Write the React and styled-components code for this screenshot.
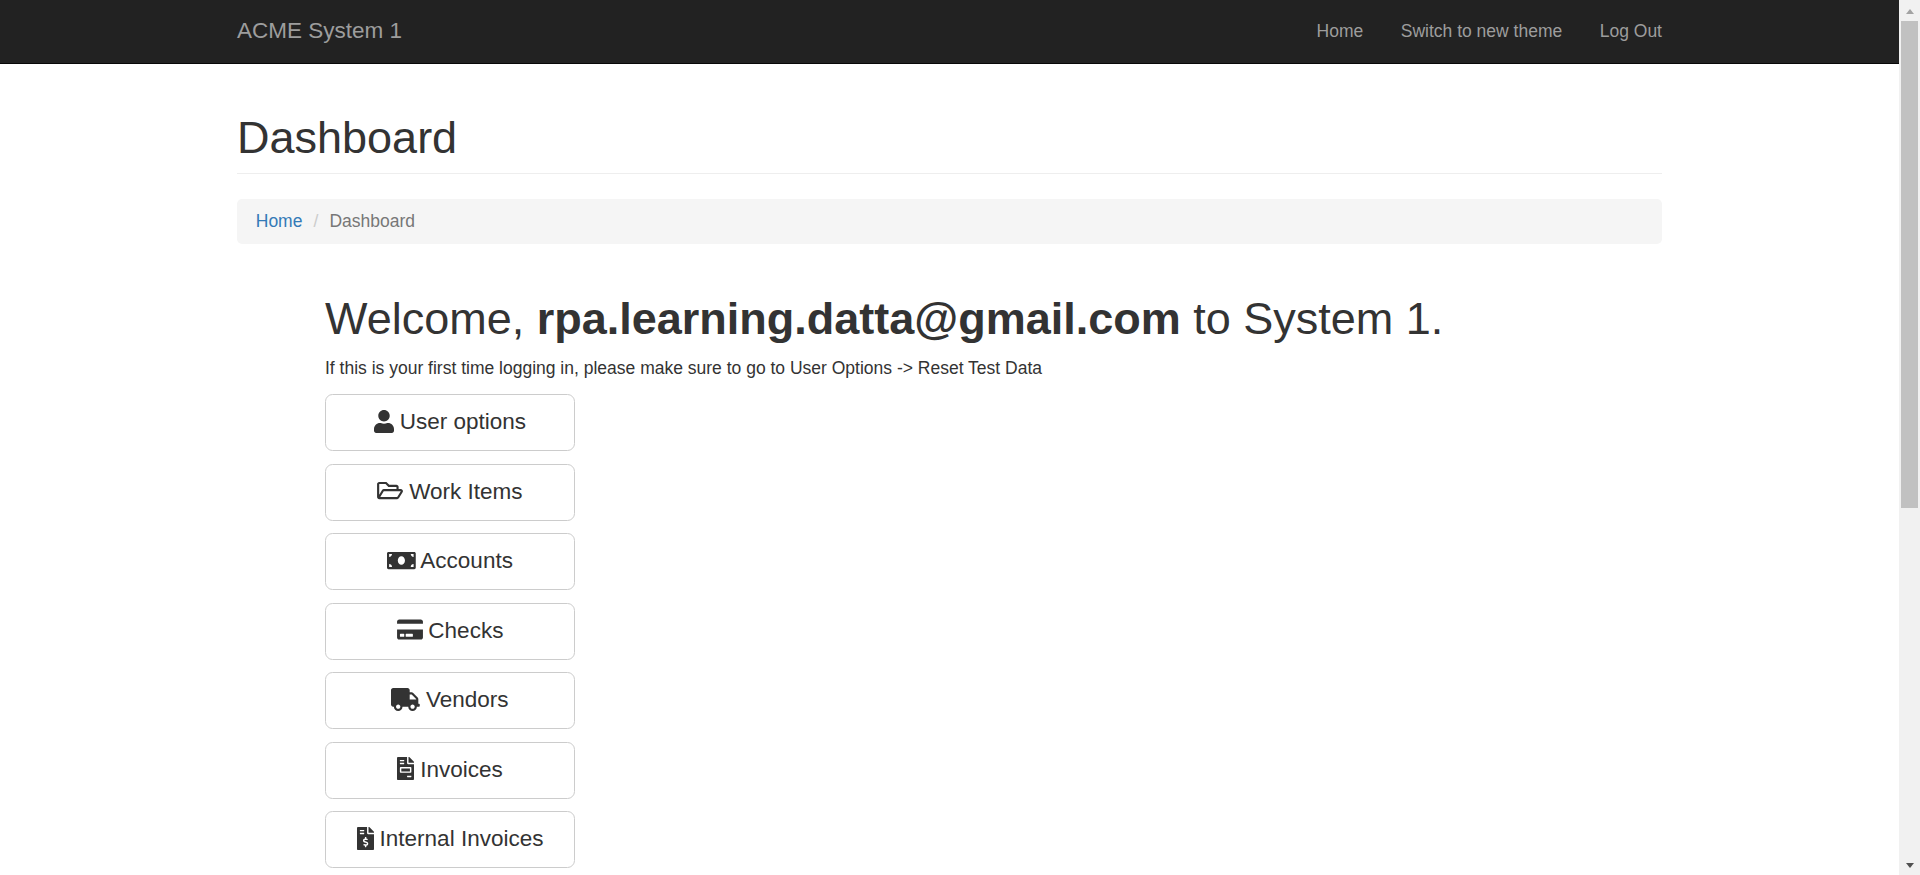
import React from "react";
import styled, { createGlobalStyle } from "styled-components";
import {
  FaUser,
  FaRegFolderOpen,
  FaMoneyBill,
  FaCreditCard,
  FaTruck,
  FaFileInvoice,
  FaFileInvoiceDollar,
} from "react-icons/fa";

const GlobalStyle = createGlobalStyle`
  *, *::before, *::after { box-sizing: border-box; }
  html, body { margin: 0; overflow: hidden; }
  body {
    font-family: "Liberation Sans", Arial, sans-serif;
    font-size: 17.5px;
    line-height: 25px;
    color: #333;
    background: #fff;
  }
`;

const Window = styled.div`
  display: flex;
  height: 875px;
  overflow: hidden;
`;

const Page = styled.div`
  flex: 1;
  min-width: 0;
`;

const Container = styled.div`
  width: 1425px;
  margin: 0 auto;
`;

const Navbar = styled.nav`
  height: 64px;
  background: #222;
  border-bottom: 1px solid #080808;
`;

const NavRow = styled(Container)`
  display: flex;
  justify-content: space-between;
  align-items: center;
  height: 62px;
`;

const Brand = styled.a`
  padding-bottom: 1px;
  font-size: 22.5px;
  color: #9d9d9d;
`;

const NavLinks = styled.div`
  display: flex;
  gap: 37.5px;
`;

const NavLink = styled.a`
  color: #9d9d9d;
`;

const PageHeader = styled.header`
  margin: 48.5px 0 25px;
  padding-bottom: 11px;
  border-bottom: 1px solid #eee;
`;

const Heading = styled.h1`
  margin: 0;
  font-size: 45px;
  line-height: 49.5px;
  font-weight: 400;
  white-space: nowrap;
`;

const Breadcrumb = styled.nav`
  display: flex;
  height: 45px;
  padding: 10px 18.75px;
  border-radius: 5px;
  background: #f5f5f5;
`;

const CrumbLink = styled.a`
  color: #337ab7;
`;

const CrumbDivider = styled.span`
  width: 27px;
  text-align: center;
  color: #ccc;
`;

const CrumbCurrent = styled.span`
  color: #777;
`;

const Content = styled.main`
  padding: 50px 0 0 88px;
`;

const Intro = styled.p`
  margin: 12px 0 13.5px;
`;

const Menu = styled.div`
  display: flex;
  flex-direction: column;
  gap: 12.5px;
`;

const MenuButton = styled.button`
  width: 250px;
  height: 57px;
  padding: 0 0 1px;
  border: 1px solid #ccc;
  border-radius: 7.5px;
  background: #fff;
  color: #333;
  font-family: inherit;
  font-size: 22.5px;
  line-height: 30px;
  text-align: center;
  white-space: nowrap;

  svg {
    width: ${(p) => p.$iconWidth}px;
    height: 23px;
    margin-right: -0.5px;
    vertical-align: -3.6px;
  }
`;

const Scrollbar = styled.div`
  display: flex;
  flex-direction: column;
  width: 21px;
  padding: 0 2px;
  background: #f1f1f1;
`;

const ScrollArrow = styled.div`
  display: flex;
  align-items: center;
  justify-content: center;
  height: 21px;
  padding-top: 2px;

  &::before {
    content: "";
    border: 4px solid transparent;
    border-top-width: ${(p) => (p.$down ? "5px" : 0)};
    border-bottom-width: ${(p) => (p.$down ? 0 : "5px")};
    border-top-color: ${(p) => (p.$down ? "#505050" : "transparent")};
    border-bottom-color: ${(p) => (p.$down ? "transparent" : "#a3a3a3")};
  }
`;

const ScrollTrack = styled.div`
  flex: 1;
`;

const ScrollThumb = styled.div`
  height: 487px;
  background: #c1c1c1;
`;

const menuItems = [
  { label: "User options", Icon: FaUser, width: 20 },
  { label: "Work Items", Icon: FaRegFolderOpen, width: 26 },
  { label: "Accounts", Icon: FaMoneyBill, width: 28.75 },
  { label: "Checks", Icon: FaCreditCard, width: 26 },
  { label: "Vendors", Icon: FaTruck, width: 28.75 },
  { label: "Invoices", Icon: FaFileInvoice, width: 17.25 },
  { label: "Internal Invoices", Icon: FaFileInvoiceDollar, width: 17.25 },
];

export default function App() {
  return (
    <Window>
      <GlobalStyle />
      <Page>
        <Navbar>
          <NavRow>
            <Brand>ACME System 1</Brand>
            <NavLinks>
              <NavLink>Home</NavLink>
              <NavLink>Switch to new theme</NavLink>
              <NavLink>Log Out</NavLink>
            </NavLinks>
          </NavRow>
        </Navbar>
        <Container>
          <PageHeader>
            <Heading>Dashboard</Heading>
          </PageHeader>
          <Breadcrumb>
            <CrumbLink>Home</CrumbLink>
            <CrumbDivider>/</CrumbDivider>
            <CrumbCurrent>Dashboard</CrumbCurrent>
          </Breadcrumb>
          <Content>
            <Heading>
              Welcome, <b>rpa.learning.datta@gmail.com</b> to System 1.
            </Heading>
            <Intro>
              If this is your first time logging in, please make sure to go to User Options -&gt; Reset Test Data
            </Intro>
            <Menu>
              {menuItems.map(({ label, Icon, width }) => (
                <MenuButton key={label} $iconWidth={width}>
                  <Icon /> {label}
                </MenuButton>
              ))}
            </Menu>
          </Content>
        </Container>
      </Page>
      <Scrollbar>
        <ScrollArrow />
        <ScrollTrack>
          <ScrollThumb />
        </ScrollTrack>
        <ScrollArrow $down />
      </Scrollbar>
    </Window>
  );
}
